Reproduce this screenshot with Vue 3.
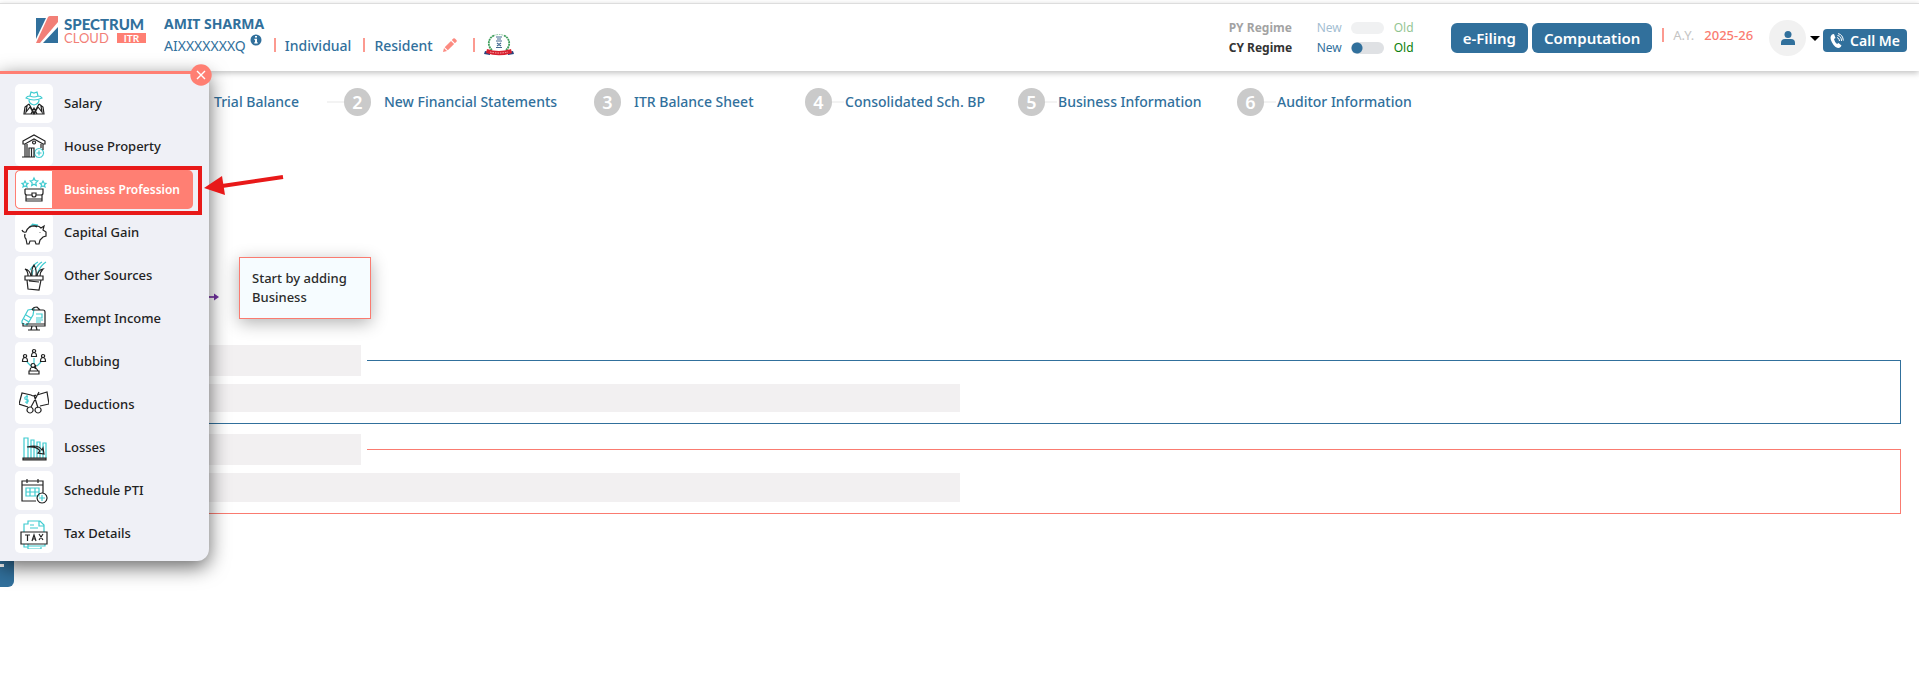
<template>
  <div class="page">
    <header class="topbar">
      <a href="#" class="logo" aria-label="Spectrum Cloud ITR">
        <svg class="logo-mark" width="24" height="28" viewBox="0 0 24 28">
          <path d="M1 2h10L1 23z" fill="#31709c" />
          <path d="M13 1q1-1 2-1h8v6L5 27H1z" fill="#f27f77" />
          <path d="M23 11v16H8z" fill="#31709c" />
        </svg>
        <span class="logo-text">
          <span class="logo-top">SPECTRUM</span>
          <span class="logo-bottom">CLOUD <b>ITR</b></span>
        </span>
      </a>

      <div class="client">
        <strong class="client-name">AMIT SHARMA</strong>
        <div class="client-row">
          <span class="pan">AIXXXXXXXQ</span>
          <svg class="info" width="12" height="12" viewBox="0 0 12 12">
            <circle cx="6" cy="6" r="5.5" fill="#31709c" />
            <path d="M5 2h2v1.6H5zM4.4 4.8H7v3.4h.7v1.2H4.3V8.200H5V6h-.6z" fill="#fff" />
          </svg>
          <i class="bar"></i>
          <span>Individual</span>
          <i class="bar"></i>
          <span>Resident</span>
          <button class="plain pencil" aria-label="Edit status">
            <svg width="14" height="14" viewBox="0 0 14 14" fill="#fc8a80">
              <path d="M0 14l1-4 3 3zM1.700 9.200l6.300-6.300 3.100 3.100-6.300 6.300zM8.800 2.100L10.300.6q.8-.8 1.600 0l1.500 1.500q.8.8 0 1.600l-1.500 1.500z" />
            </svg>
          </button>
          <i class="bar"></i>
          <svg class="emblem" width="30" height="22" viewBox="0 0 30 22" fill="none">
            <path d="M10 1.500C4 4 3 12 8 16M20 1.500c6 2.500 7 10.500 2 14.500" stroke="#3f9e5c" stroke-width="1.800" stroke-dasharray="2 .6" />
            <path d="M10 1.500q5-2 10 0" stroke="#7cc093" stroke-dasharray="1.500 1" />
            <path d="M12 3h6M13 5h4M12 7h6M13 9l4 3M17 9l-4 3M12 13.500h6" stroke="#456a92" stroke-width="1.200" />
            <path d="M1 17l5 1v3l-6-1zM29 17l-5 1v3l6-1z" fill="#27427e" />
            <path d="M3 15q12 4 24 0l1 4q-13 4.500-26 0z" fill="#d8202f" />
            <path d="M6 18q9 2 18 0" stroke="#f6b5b5" stroke-width="1" stroke-dasharray="1.500 1" />
          </svg>
        </div>
      </div>

      <div class="regimes">
        <div v-for="r in regimes" :key="r.label" class="regime" :class="{ faded: r.disabled }">
          <span class="regime-label">{{ r.label }}</span>
          <label class="regime-switch">
            <span class="new">New</span>
            <input v-model="r.old" type="checkbox" :disabled="r.disabled">
            <span class="old">Old</span>
          </label>
        </div>
      </div>

      <div class="actions">
        <button class="btn">e-Filing</button>
        <button class="btn">Computation</button>
      </div>

      <div class="year">
        <i class="bar"></i>
        <span class="year-label">A.Y.</span>
        <span class="year-value">2025-26</span>
      </div>

      <button class="plain user" aria-label="Account">
        <span class="avatar">
          <svg width="14" height="14" viewBox="0 0 14 14" fill="#31709c">
            <circle cx="7" cy="3.500" r="3.500" />
            <path d="M0 14v-2q0-4 4-4h6q4 0 4 4v2z" />
          </svg>
        </span>
        <svg class="caret" width="10" height="5" viewBox="0 0 10 5"><path d="M0 0h10L5 5z" /></svg>
      </button>

      <button class="btn call">
        <svg width="14" height="16" viewBox="0 0 14 16" fill="none">
          <path d="M2 1.500Q-1 4 2 9.500T9 15q2-1 2.500-2.500L8.500 10 7 11Q4.500 9 4 6l1.500-1L4 1z" fill="#fff" />
          <path d="M7 4.500q2.500.5 2.500 3.500M7.500 2.500q4 .5 4 5.500M8 .6q5 1 5.300 7" stroke="#fff" />
        </svg>
        Call Me
      </button>
    </header>

    <main>
      <ol class="steps">
        <li v-for="(step, i) in steps" :key="step" class="step">
          <span class="step-number">{{ i + 1 }}</span>
          <a href="#">{{ step }}</a>
        </li>
      </ol>

      <section class="start">
        <svg class="start-arrow" width="60" height="10" viewBox="0 0 60 10">
          <path d="M0 5h56" stroke="#8a4fb0" stroke-width="2" />
          <path d="M55 1.500l5 3.500-5 3.500z" fill="#7030a0" />
        </svg>
        <p class="hint">Start by adding Business</p>
      </section>

      <fieldset class="skeleton blue">
        <legend><span class="block"></span></legend>
        <div class="block line"></div>
      </fieldset>
      <fieldset class="skeleton coral">
        <legend><span class="block"></span></legend>
        <div class="block line"></div>
      </fieldset>
    </main>

    <button class="side-tab" aria-label="Open menu"></button>

    <nav class="drawer">
      <button class="plain close" aria-label="Close menu">
        <svg width="22" height="22" viewBox="0 0 22 22">
          <circle cx="11" cy="11" r="10.700" fill="#ff7f73" />
          <path d="M7 7l8 8M15 7l-8 8" stroke="#fff" stroke-width="1.400" />
        </svg>
      </button>
      <a
        v-for="item in menu"
        :key="item.name"
        href="#"
        class="item"
        :class="{ active: active === item.name }"
        @click.prevent="active = item.name"
      >
        <span class="item-icon">
          <svg width="30" height="30" viewBox="0 0 30 30">
            <path v-if="item.fill" :d="item.fill" fill="#777" />
            <path :d="item.teal" class="teal" />
            <path :d="item.dark" class="dark" />
          </svg>
        </span>
        <span class="item-name">{{ item.name }}</span>
      </a>
      <span class="marker"></span>
      <svg class="marker-arrow" width="80" height="26" viewBox="0 0 80 26">
        <path d="M79 6L18 15" stroke="#e81919" stroke-width="4" />
        <path d="M0 17L18 5l3 19z" fill="#e81919" />
      </svg>
    </nav>
  </div>
</template>

<script setup>
import { ref } from 'vue';

const active = ref('Business Profession');

const regimes = ref([
  { label: 'PY Regime', old: false, disabled: true },
  { label: 'CY Regime', old: false, disabled: false }
]);

const steps = [
  'Trial Balance',
  'New Financial Statements',
  'ITR Balance Sheet',
  'Consolidated Sch. BP',
  'Business Information',
  'Auditor Information'
];

const menu = [
  {
    name: 'Salary',
    teal: 'M7 9q8 4 16 0-1-2-4-2l-1-4-3 1-3-1-1 4q-3 0-4 2zM11 7q4 2 8 0M10 11q0 4 5 5 5-1 5-5',
    dark: 'M10 15l-4 3-1 7h20l-1-7-4-3M10 15l5 9 5-9M8 17l-1 6 4-5 4 7 4-7 4 5-1-6M12 25l3-6 3 6'
  },
  {
    name: 'House Property',
    teal: 'M20 16.500a4.500 4.500 0 1 0 .1 0M20 18.500v5M17.500 21h5',
    dark: 'M4 9L15 3l11 6v3h-2l-9-5-9 5H4zM6 12v13M8 12v13M24 12v6M22 12v4M3 25h13M10 25v-9h5v9M12.500 16v9M15 9a1.500 1.500 0 1 0 .1 0'
  },
  {
    name: 'Business Profession',
    teal: 'M6 6l1 2 2 .3-1.500 1.500.5 2.200-2-1-2 1 .5-2.200L3 8.300 5 8zM15 3l1.200 2.500 2.600.4-2 2 .5 2.600L15 9.200l-2.300 1.300.5-2.600-2-2 2.600-.4zM24 6l1 2 2 .3-1.500 1.500.5 2.200-2-1-2 1 .5-2.200L21 8.300l2-.3z',
    dark: 'M6 14h18v4q0 2-2 2h-5M13 20H8q-2 0-2-2v-4M7 20v6h16v-6M7 24h16M13 18h4v2a2 2 0 0 1-4 0z'
  },
  {
    name: 'Capital Gain',
    teal: 'M11 8q4-2 8 0M13 6l6 1M12 7h7',
    dark: 'M3 12q1 3 4 2 2-7 11-6 2 0 4 2l3-2-1 4 3 2v4l-3 1-3 3-1 4h-3l-1-3h-5l-1 3H8l-1-5q-2-2-1-5M21 14v.6M10 9q4-2 8 0'
  },
  {
    name: 'Other Sources',
    teal: 'M11 9q4-6 8-8M16 9q3-6 7-8M19 11q3-7 8-10M13 14l1-5M18 14l1-3',
    dark: 'M6 15h18v4H6zM8 19l1 9 11 1 2-10M9 15q0-5-3-7 5 1 6 7M13 15q-1-7 2-11 3 5 2 11M18 15q1-6 6-7-3 3-3 7M10 20l10 1'
  },
  {
    name: 'Exempt Income',
    teal: 'M3 17l6-11 6-1-1 6-6 10-5-2zM7 11l5 3M5 15l5 3M17 10h6v4h-6M17 16h7M17 18h5',
    dark: 'M13 6h11q2 0 2 2v14H4v-3M7 20h19M13 22l-1 4M17 22l1 4M9 26h12M13 6q1-3 5-3l3 3'
  },
  {
    name: 'Clubbing',
    teal: 'M15 11v6M8 15l4 4M22 15l-4 4',
    dark: 'M15 2.500a1.600 1.600 0 1 0 .1 0M12.500 9.500q0-4 2.500-4t2.500 4zM6 7.500a1.600 1.600 0 1 0 .1 0M3.500 14.500q0-4 2.500-4t2.500 4zM24 7.500a1.600 1.600 0 1 0 .1 0M21.500 14.500q0-4 2.500-4t2.500 4zM14 16.500a2 2 0 1 0 .1 0M17 18l-1 4M11 24q0-4 3-4t5 4M10 24h10v3H10z'
  },
  {
    name: 'Deductions',
    teal: 'M9 7q-4-1-3 2l3 1q1 3-3 2M8 5v9',
    dark: 'M12 5L3 3 0 14l9 3M12 5q3 2 5 0M18 5l10-3 2 12-9 2M20 2l-8 15M15 5l4 13M11 17a3 3 0 1 0 .1 0M19 17a3 3 0 1 0 .1 0'
  },
  {
    name: 'Losses',
    fill: 'M4 25h23v2H4z',
    teal: 'M5 25V5h4v20M12 25V7h3v18M18 25V9h3v16M24 25V10h3v15',
    dark: 'M8 14q11-3 15 3l1-2 1 6-6-1 2-2Q18 13 8 14M4 25h23v2H4z'
  },
  {
    name: 'Schedule PTI',
    teal: 'M7 12h13v8H7zM7 16h13M11 12v8M16 12v8M23 19v6M20 22h6',
    dark: 'M17 25H3V5h21v12M3 9h21M8 3v4M19 3v4M23 17a5 5 0 1 0 .1 0'
  },
  {
    name: 'Tax Details',
    teal: 'M5 13V5h4V2h12l4 4v7M20 2v5h5M11 6h4M11 9h8M5 25v3h4v2h13v-2M9 25v2h17v-2',
    dark: 'M2 13h26v12H2zM6 16h5M8.500 16v6M13 22l2-6 2 6M14 20h2M20 15l4 6M24 15l-4 6'
  }
];
</script>

<style>
body {
  background: #fff;
}
</style>

<style scoped>
.page {
  position: relative;
  min-height: 100vh;
  overflow: hidden;
  font-family: "Noto Sans", "Open Sans", sans-serif;
  font-size: 14px;
  color: #31709c;
}

.plain {
  border: 0;
  padding: 0;
  background: none;
  cursor: pointer;
}

svg {
  display: block;
  flex-shrink: 0;
}

a {
  color: inherit;
  text-decoration: none;
}

.bar {
  width: 2px;
  height: 14px;
  background: #fc9a90;
}

/* Top bar */
.topbar {
  display: flex;
  align-items: flex-start;
  height: 67px;
  margin-top: 3px;
  padding: 0 12px 0 35px;
  border-top: 1px solid #ddd;
  box-shadow: 0 2px 6px rgba(0, 0, 0, 0.25);
}

.logo {
  display: flex;
  gap: 5px;
  margin-top: 12px;
}

.logo-text {
  display: flex;
  flex-direction: column;
  width: 82px;
  padding-top: 1px;
  font-family: Lato, sans-serif;
  font-size: 15px;
  line-height: 14px;
}

.logo-top {
  font-weight: 900;
}

.logo-bottom {
  display: flex;
  align-items: center;
  justify-content: space-between;
  font-size: 13px;
  color: #f27f77;
}

.logo-bottom b {
  width: 29px;
  background: #ff7f73;
  color: #fff;
  font-size: 10px;
  line-height: 10px;
  text-align: center;
}

.client {
  margin: 10px auto 0 18px;
}

.client-name {
  display: block;
  font-size: 14px;
  line-height: 20px;
}

.client-row {
  display: flex;
  align-items: center;
  height: 22px;
  font-weight: 500;
}

.pan {
  margin-right: 4px;
  font-weight: 400;
}

.info {
  align-self: flex-start;
}

.client-row .bar {
  margin: 0 9px 0 12px;
}

.pencil {
  margin-left: 10px;
}

.client-row .pencil + .bar {
  margin-left: 16px;
}

/* Regime switches */
.regimes {
  display: flex;
  flex-direction: column;
  margin: 14px 38px 0 0;
  font-size: 12px;
  line-height: 20px;
}

.regime {
  display: flex;
}

.regime.faded {
  opacity: 0.45;
}

.regime-label {
  width: 88px;
  font-weight: 700;
  color: #333;
}

.regime-switch {
  display: flex;
  align-items: center;
}

.new {
  width: 34px;
}

.old {
  width: 19px;
  margin-left: 10px;
  color: #0a800a;
}

.regime input {
  appearance: none;
  width: 33px;
  height: 12px;
  margin: 0;
  border-radius: 6px;
  background: radial-gradient(circle at 6px 6px, #31709c 5px, transparent 6px), #dfe1e4;
}

.regime input:checked {
  background: radial-gradient(circle at 27px 6px, #31709c 5px, transparent 6px), #dfe1e4;
}

.regime input:disabled {
  background: #dfe1e4;
}

/* Right side */
.actions {
  display: flex;
  gap: 4px;
  margin-top: 19px;
}

.btn {
  height: 30px;
  padding: 0 12px;
  border: 0;
  border-radius: 6px;
  background: #31709c;
  color: #fff;
  font-family: inherit;
  font-size: 15px;
  font-weight: 600;
  cursor: pointer;
}

.year {
  display: flex;
  align-items: center;
  height: 20px;
  margin: 21px 16px 0 10px;
  font-size: 13px;
}

.year-label {
  margin: 0 10px 0 9px;
  color: #c4c4c4;
}

.year-value {
  font-weight: 500;
  color: #fa7b70;
}

.user {
  display: flex;
  align-items: center;
  gap: 4px;
  margin: 16px 3px 0 0;
}

.avatar {
  display: grid;
  place-items: center;
  width: 37px;
  height: 36px;
  border-radius: 50%;
  background: #f1f1f1;
}

.call {
  display: flex;
  align-items: center;
  gap: 6px;
  height: 23px;
  margin-top: 25px;
  padding: 0 7px;
  border-radius: 4px;
  font-size: 14px;
}

/* Steps */
.steps {
  display: grid;
  grid-template-columns: 170px 250px 211px 213px 219px auto;
  margin: 0;
  padding: 17px 0 0 174px;
  list-style: none;
}

.step {
  position: relative;
  display: flex;
  align-items: center;
  gap: 13px;
  height: 28px;
  font-weight: 500;
  white-space: nowrap;
}

.step a {
  padding-bottom: 2px;
}

.step-number {
  width: 27px;
  border-radius: 50%;
  background: #cacaca;
  color: #fff;
  font-size: 18px;
  font-weight: 600;
  line-height: 28px;
  text-align: center;
}

.step:nth-child(n + 4)::before,
.step:nth-child(2)::before {
  content: "";
  position: absolute;
  left: 27px;
  width: 12px;
  height: 2px;
  background: #f3f3f3;
}

.step:nth-child(2)::before {
  left: -17px;
  width: 17px;
}

/* Start hint */
.start {
  display: flex;
  align-items: center;
  gap: 20px;
  margin: 141px 0 26px 159px;
}

.start-arrow {
  padding-top: 18px;
}

.hint {
  width: 106px;
  margin: 0;
  padding: 11px 12px;
  border: 1px solid #fa7b70;
  background: #f6fcff;
  box-shadow: 0 4px 16px rgba(0, 0, 0, 0.3);
  font-size: 13px;
  font-weight: 500;
  line-height: 19px;
  color: #2b2b2b;
}

/* Loading placeholders */
.skeleton {
  margin: 0 18px 10px;
  padding: 8px 12px 11px;
  border: 1px solid #31709c;
}

.skeleton.coral {
  border-color: #fa7b70;
}

.skeleton legend {
  width: 324px;
  padding: 0 6px;
}

.block {
  display: block;
  height: 31px;
  background: #f2f0f1;
}

.block.line {
  width: 50%;
  height: 28px;
}

.coral .block.line {
  height: 29px;
}

/* Drawer */
.side-tab {
  position: absolute;
  top: 520px;
  left: -10px;
  width: 24px;
  height: 67px;
  border: 0;
  border-radius: 6px;
  background: linear-gradient(#fff, #fff) 8px 44px / 6px 3px no-repeat, #31709c;
}

.drawer {
  position: absolute;
  top: 71px;
  left: 0;
  display: flex;
  flex-direction: column;
  gap: 4px;
  width: 178px;
  padding: 10px 16px 8px 15px;
  border-top: 3px solid #ff7f73;
  border-radius: 0 0 12px 0;
  background: #eff0f6;
  box-shadow: 0 6px 20px rgba(0, 0, 0, 0.6);
}

.close {
  position: absolute;
  top: -10px;
  right: -3px;
}

.item {
  display: flex;
  align-items: center;
  height: 39px;
  border-radius: 5px;
  font-size: 13px;
  font-weight: 500;
  color: #222;
}

.item-icon {
  display: grid;
  place-items: center;
  box-sizing: border-box;
  width: 38px;
  height: 39px;
  margin-right: 11px;
  border-radius: 5px;
  background: #fff;
}

.item-name {
  padding-bottom: 1px;
}

.item.active {
  background: #ff7f73;
  color: #fff;
  font-size: 12px;
  font-weight: 600;
}

.item.active .item-icon {
  border: 1px solid #ff7f73;
  border-radius: 5px 0 0 5px;
}

.teal,
.dark {
  fill: none;
  stroke: #222;
  stroke-width: 1.2;
}

.teal {
  stroke: #3fcbd0;
}

.marker {
  position: absolute;
  top: 92px;
  left: 4px;
  box-sizing: border-box;
  width: 198px;
  height: 49px;
  border: 4px solid #e81919;
}

.marker-arrow {
  position: absolute;
  top: 97px;
  left: 204px;
}
</style>
